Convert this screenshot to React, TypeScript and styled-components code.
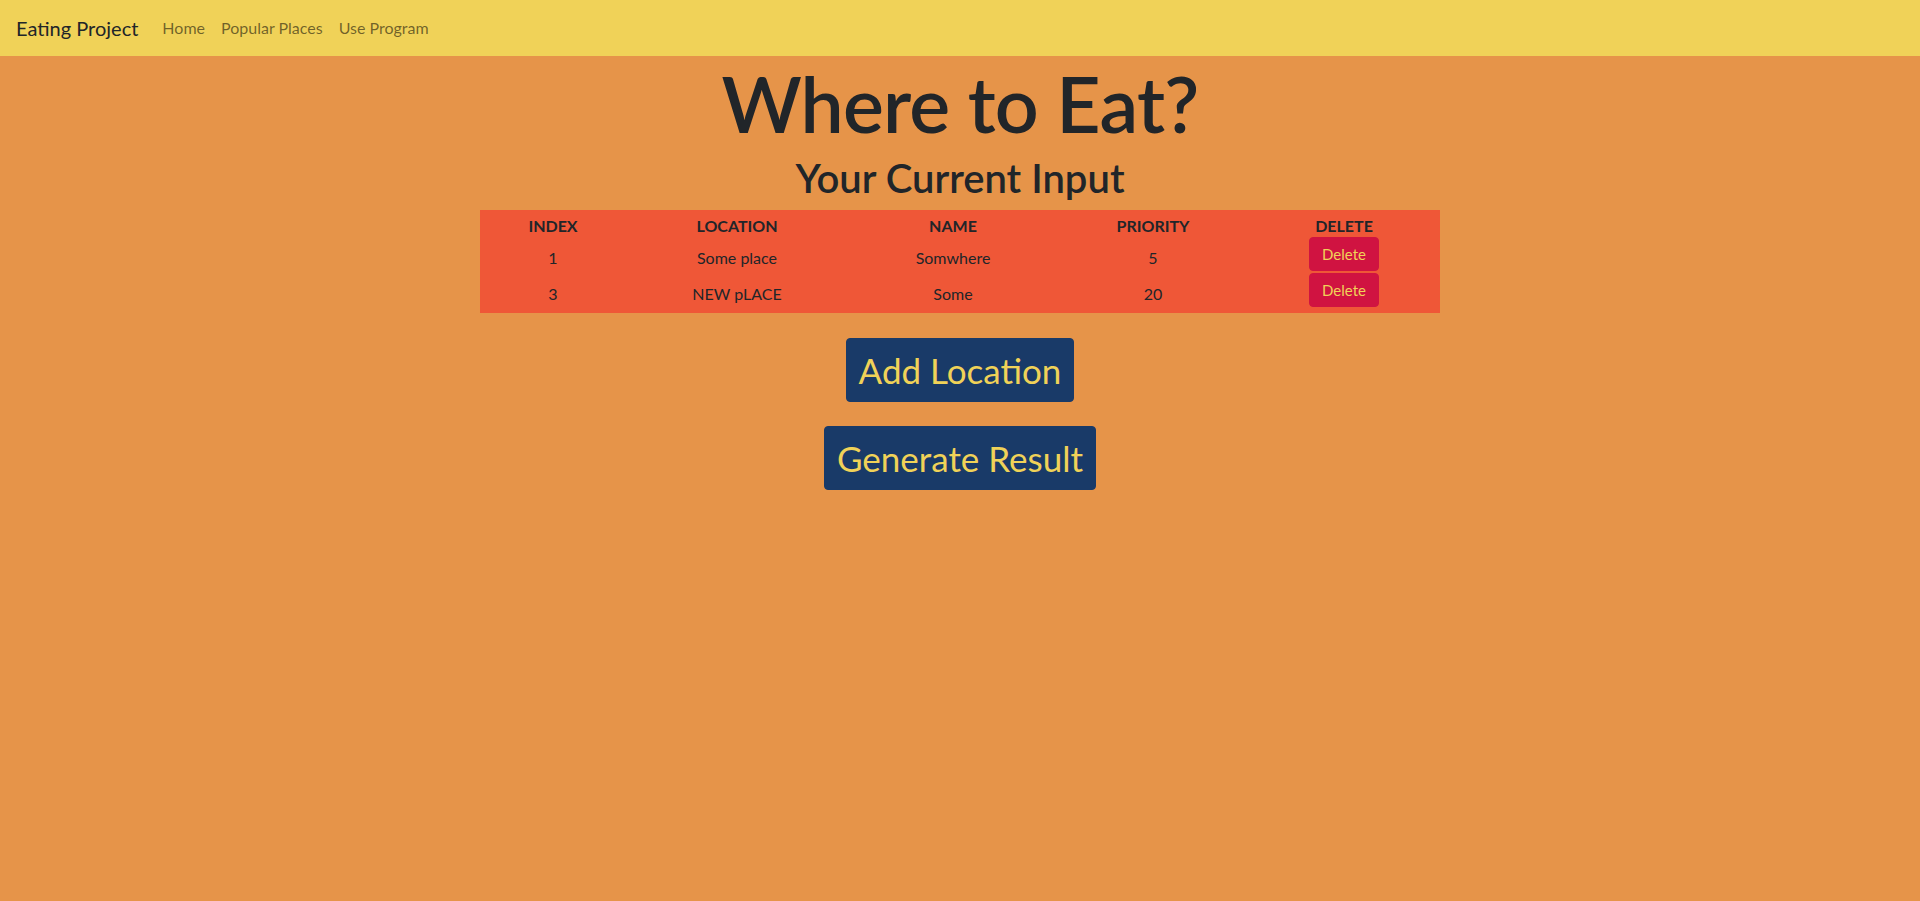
import React from "react";
import styled, { createGlobalStyle } from "styled-components";

const GlobalStyle = createGlobalStyle`
  html, body {
    margin: 0;
    padding: 0;
    background: #e69449;
    font-family: Lato, "Open Sans", sans-serif;
    color: #212529;
  }
  * { box-sizing: border-box; }
`;

const Page = styled.div`
  min-height: 901px;
  background: #e69449;
  display: flex;
  flex-direction: column;
`;

const NavBar = styled.nav`
  height: 56px;
  background: #f0d258;
  display: flex;
  align-items: center;
  padding: 8px 16px;
`;

const Brand = styled.a`
  font-size: 20px;
  line-height: 30px;
  padding: 5px 0;
  margin-right: 16px;
  color: #212529;
  text-decoration: none;
`;

const NavLinks = styled.div`
  display: flex;
`;

const NavLink = styled.a`
  font-size: 16px;
  line-height: 24px;
  padding: 8px;
  color: rgba(0, 0, 0, 0.55);
  text-decoration: none;
`;

const Main = styled.main`
  display: flex;
  flex-direction: column;
  align-items: center;
`;

const Title = styled.h1`
  margin: -1px 0 0;
  font-size: 77px;
  font-weight: 600;
  line-height: 96px;
  letter-spacing: -0.8px;
  text-align: center;
`;

const SubTitle = styled.h2`
  margin: 3px 0 8px;
  font-size: 40px;
  font-weight: 600;
  line-height: 48px;
  text-align: center;
`;

const TableBox = styled.div`
  width: 960px;
  background: #ef5737;
  padding-bottom: 5px;
`;

const Table = styled.table`
  width: 100%;
  border-collapse: collapse;
  table-layout: fixed;
  font-size: 16px;
`;

const Th = styled.th<{ $w: number }>`
  width: ${(p) => p.$w}px;
  height: 26px;
  font-weight: 700;
  text-transform: uppercase;
  text-align: center;
  vertical-align: top;
  line-height: 20px;
  padding: 6px 0 0;
`;

const Td = styled.td<{ $button?: boolean }>`
  height: 36px;
  text-align: center;
  vertical-align: top;
  line-height: 24px;
  padding: ${(p) => (p.$button ? "1px 0 0" : "10px 0 0")};
`;

const DeleteButton = styled.button`
  display: inline-block;
  font-family: inherit;
  font-size: 15px;
  line-height: 24px;
  padding: 4px 12px;
  border: 1px solid #d01341;
  border-radius: 4px;
  background: #d01341;
  color: #f0d258;
  cursor: pointer;
`;

const Actions = styled.div`
  margin-top: 25px;
  display: flex;
  flex-direction: column;
  align-items: center;
  gap: 24px;
`;

const BigButton = styled.button`
  font-family: inherit;
  font-size: 35px;
  line-height: 54px;
  padding: 4px 12px;
  border: 1px solid #193a68;
  border-radius: 4px;
  background: #193a68;
  color: #f0d258;
  cursor: pointer;
`;

const columns = [
  { key: "index", label: "Index", w: 146 },
  { key: "location", label: "Location", w: 222 },
  { key: "name", label: "Name", w: 210 },
  { key: "priority", label: "Priority", w: 190 },
  { key: "delete", label: "Delete", w: 192 },
];

const rows = [
  { index: 1, location: "Some place", name: "Somwhere", priority: 5 },
  { index: 3, location: "NEW pLACE", name: "Some", priority: 20 },
];

export default function App() {
  return (
    <>
      <GlobalStyle />
      <Page>
        <NavBar>
          <Brand href="#">Eating Project</Brand>
          <NavLinks>
            <NavLink href="#">Home</NavLink>
            <NavLink href="#">Popular Places</NavLink>
            <NavLink href="#">Use Program</NavLink>
          </NavLinks>
        </NavBar>
        <Main>
          <Title>Where to Eat?</Title>
          <SubTitle>Your Current Input</SubTitle>
          <TableBox>
            <Table>
              <thead>
                <tr>
                  {columns.map((c) => (
                    <Th key={c.key} $w={c.w}>
                      {c.label}
                    </Th>
                  ))}
                </tr>
              </thead>
              <tbody>
                {rows.map((r) => (
                  <tr key={r.index}>
                    <Td>{r.index}</Td>
                    <Td>{r.location}</Td>
                    <Td>{r.name}</Td>
                    <Td>{r.priority}</Td>
                    <Td $button>
                      <DeleteButton>Delete</DeleteButton>
                    </Td>
                  </tr>
                ))}
              </tbody>
            </Table>
          </TableBox>
          <Actions>
            <BigButton>Add Location</BigButton>
            <BigButton>Generate Result</BigButton>
          </Actions>
        </Main>
      </Page>
    </>
  );
}
